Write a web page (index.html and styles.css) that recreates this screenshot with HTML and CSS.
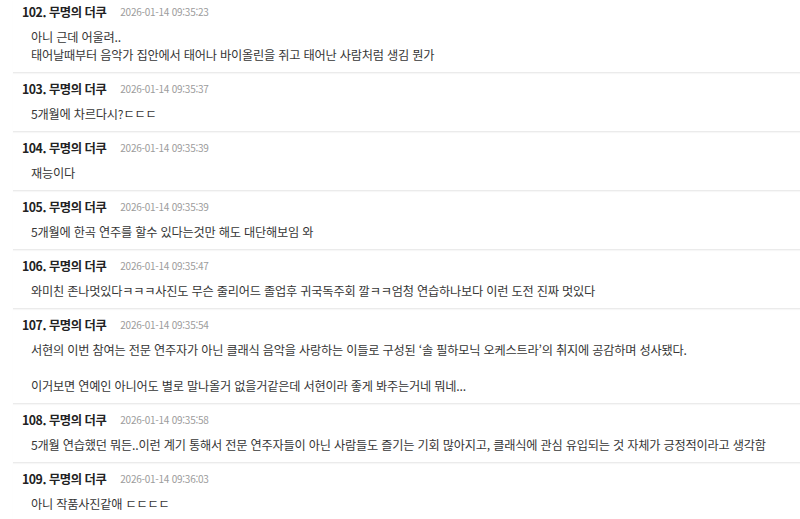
FILE: index.html
```html
<!DOCTYPE html>
<html lang="ko">
<head>
<meta charset="utf-8">
<title>댓글</title>
<link rel="stylesheet" href="styles.css">
</head>
<body>
<div class="list">
  <div class="item first">
    <div class="head"><span class="num">102. 무명의 더쿠</span><span class="date">2026-01-14 09:35:23</span></div>
    <div class="body">아니 근데 어울려..<br>태어날때부터 음악가 집안에서 태어나 바이올린을 쥐고 태어난 사람처럼 생김 뭔가</div>
  </div>
  <div class="item">
    <div class="head"><span class="num">103. 무명의 더쿠</span><span class="date">2026-01-14 09:35:37</span></div>
    <div class="body">5개월에 차르다시?ㄷㄷㄷ</div>
  </div>
  <div class="item">
    <div class="head"><span class="num">104. 무명의 더쿠</span><span class="date">2026-01-14 09:35:39</span></div>
    <div class="body">재능이다</div>
  </div>
  <div class="item">
    <div class="head"><span class="num">105. 무명의 더쿠</span><span class="date">2026-01-14 09:35:39</span></div>
    <div class="body">5개월에 한곡 연주를 할수 있다는것만 해도 대단해보임 와</div>
  </div>
  <div class="item">
    <div class="head"><span class="num">106. 무명의 더쿠</span><span class="date">2026-01-14 09:35:47</span></div>
    <div class="body">와미친 존나멋있다ㅋㅋㅋ사진도 무슨 줄리어드 졸업후 귀국독주회 깔ㅋㅋ엄청 연습하나보다 이런 도전 진짜 멋있다</div>
  </div>
  <div class="item">
    <div class="head"><span class="num">107. 무명의 더쿠</span><span class="date">2026-01-14 09:35:54</span></div>
    <div class="body">서현의 이번 참여는 전문 연주자가 아닌 클래식 음악을 사랑하는 이들로 구성된 ‘솔 필하모닉 오케스트라’의 취지에 공감하며 성사됐다.<br><br>이거보면 연예인 아니어도 별로 말나올거 없을거같은데 서현이라 좋게 봐주는거네 뭐네...</div>
  </div>
  <div class="item">
    <div class="head"><span class="num">108. 무명의 더쿠</span><span class="date">2026-01-14 09:35:58</span></div>
    <div class="body">5개월 연습했던 뭐든..이런 계기 통해서 전문 연주자들이 아닌 사람들도 즐기는 기회 많아지고, 클래식에 관심 유입되는 것 자체가 긍정적이라고 생각함</div>
  </div>
  <div class="item">
    <div class="head"><span class="num">109. 무명의 더쿠</span><span class="date">2026-01-14 09:36:03</span></div>
    <div class="body">아니 작품사진같애 ㄷㄷㄷㄷ</div>
  </div>
</div>
</body>
</html>
```

FILE: styles.css
```css
html, body {
  margin: 0;
  padding: 0;
  background: #ffffff;
}
body {
  font-family: "Noto Sans CJK KR", "Noto Sans", sans-serif;
  color: #333333;
  overflow: hidden;
}
.list {
  margin-left: 13px;
}
.item {
  padding: 7px 9px 8px;
  border-bottom: 1px solid #ebebeb;
  box-shadow: 0 1px 1px rgba(0, 0, 0, 0.03);
}
.item.first {
  padding-top: 3px;
}
.head {
  display: flex;
  align-items: center;
  height: 18px;
  line-height: 18px;
}
.num {
  font-size: 12.3px;
  font-weight: 700;
  color: #222222;
  letter-spacing: -0.45px;
}
.date {
  font-size: 10px;
  color: #9c9c9c;
  margin-left: 14px;
  letter-spacing: -0.25px;
}
.body {
  margin-top: 7px;
  padding-left: 9px;
  font-size: 12.2px;
  line-height: 18px;
  color: #363636;
  white-space: nowrap;
  letter-spacing: -0.2px;
}
```
